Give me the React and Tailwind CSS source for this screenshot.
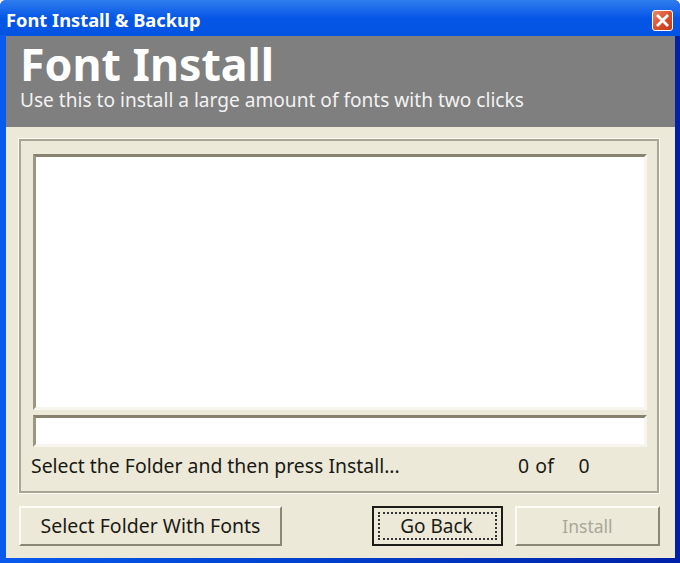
const uiFont = "font-['Noto_Sans','DejaVu_Sans',sans-serif]"

function CloseButton() {
  return (
    <div className="w-[21px] h-[21px] rounded-[3px] border border-white bg-gradient-to-br from-[#e9876a] via-[#d9512f] to-[#c13a1a] flex items-center justify-center">
      <svg width="13" height="13" viewBox="0 0 13 13">
        <path d="M2 2 L11 11 M11 2 L2 11" stroke="#fff" strokeWidth="2.8" strokeLinecap="square" />
      </svg>
    </div>
  )
}

function Sunken({ className }) {
  return (
    <div className={`bg-white border-[3px] border-t-[#86826f] border-l-[#9a9785] border-r-[#f7f5ee] border-b-[#f7f5ee] ${className}`} />
  )
}

function Button({ children, className }) {
  return (
    <div className={`h-10 flex items-center justify-center bg-[#ece9d8] border-2 border-t-[#fbfaf5] border-l-[#fbfaf5] border-r-[#8a8776] border-b-[#8a8776] ${className}`}>
      {children}
    </div>
  )
}

export default function App() {
  return (
    <div className={`w-[680px] h-[563px] flex flex-col overflow-hidden rounded-t-md bg-gradient-to-r from-[#0a5aee] to-[#0020a8] ${uiFont} text-[#1a1a14]`}>
      {/* title bar */}
      <div className="h-9 shrink-0 flex items-center justify-between pl-1.5 pr-[7px] pt-[5px] bg-gradient-to-b from-[#2f7dee] via-[#0556e6] to-[#0454e2]">
        <span className="text-[18.3px] font-bold text-white leading-none">Font Install &amp; Backup</span>
        <CloseButton />
      </div>

      <div className="flex-1 flex flex-col ml-1.5 mr-[5px] mb-[5px] bg-[#ece9d8]">
        {/* header */}
        <div className="h-[91px] shrink-0 bg-[#7f7f7f] pl-[14px] pt-[3px] text-white">
          <div className="text-[44.7px] font-bold leading-[50px]">Font Install</div>
          <div className="text-[19.1px] leading-[22px] text-[#f2f2f2]">Use this to install a large amount of fonts with two clicks</div>
        </div>

        {/* group box */}
        <div className="mt-3 ml-[13px] mr-[16px] h-[354px] border-2 border-[#a9a695] outline outline-1 outline-[#fbfaf5] pl-3 pr-[10px] pt-[13px] flex flex-col">
          <Sunken className="h-[256px]" />
          <Sunken className="h-[32px] mt-[5px]" />
          <div className="flex mt-[6px] text-[19.4px] leading-[26px]">
            <span className="w-[487px] -ml-[2px]">Select the Folder and then press Install...</span>
            <span className="tracking-[0.5px]">0 of</span>
            <span className="ml-[24px]">0</span>
          </div>
        </div>

        {/* buttons */}
        <div className="flex mt-[13px] ml-[13px] text-[19.5px]">
          <Button className="w-[263px]">Select Folder With Fonts</Button>
          <div className="ml-[90px] w-[131px] h-10 border-2 border-[#1c1c18] flex items-center justify-center p-1 bg-[#ece9d8]">
            <div className="w-full h-full border-2 border-dotted border-[#333] flex items-center justify-center pr-[2px] text-[19px]">Go Back</div>
          </div>
          <Button className="w-[145px] ml-3 text-[#a9a798] text-[17.5px]">Install</Button>
        </div>
      </div>
    </div>
  )
}
